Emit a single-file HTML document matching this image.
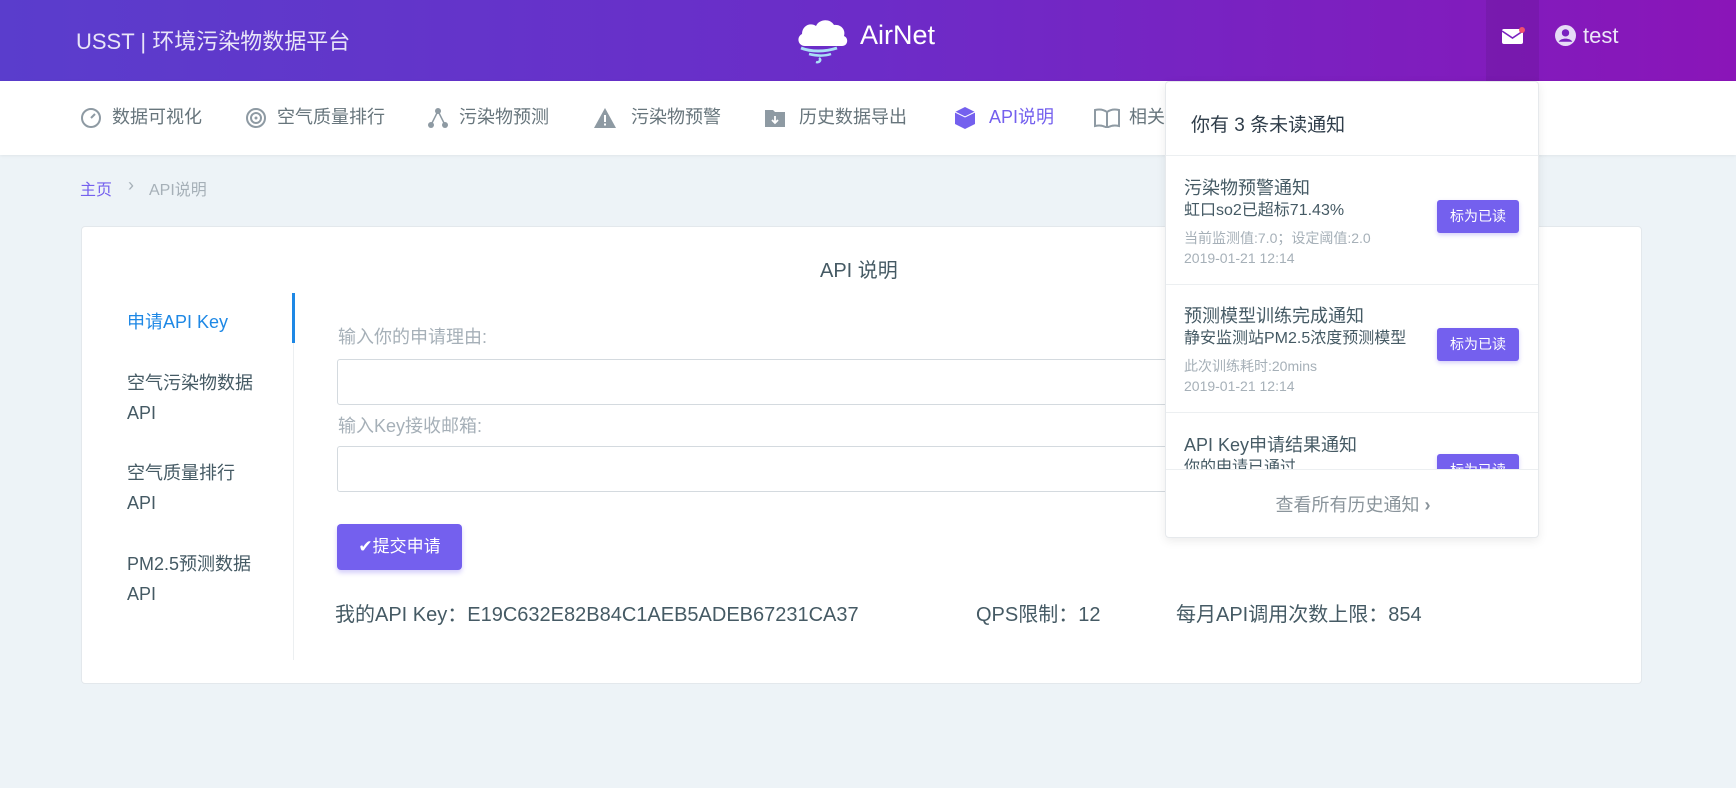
<!DOCTYPE html>
<html><head><meta charset="utf-8"><style>
*{box-sizing:border-box;margin:0;padding:0}
body{width:1736px;height:788px;overflow:hidden;background:#edf3f7;font-family:"Liberation Sans","Noto Sans CJK SC",sans-serif;color:#455a64;position:relative}
.a{position:absolute;white-space:nowrap}
.hdr{position:absolute;left:0;top:0;width:1736px;height:81px;background:linear-gradient(90deg,#5a3dcc,#6c2cc8 50%,#8a15b8);}
.nav{position:absolute;left:0;top:81px;width:1736px;height:74px;background:#fff;box-shadow:0 1px 3px rgba(0,0,0,.06)}
.ni{position:absolute;top:105px;font-size:18px;color:#67757c;line-height:24px}
.card{position:absolute;left:81px;top:226px;width:1561px;height:458px;background:#fff;border:1px solid #e3e8ec;border-radius:4px}
.inp{position:absolute;left:337px;width:900px;height:46px;border:1px solid #d4dadf;border-radius:3px;background:#fff}
.dd{position:absolute;left:1165px;top:81px;width:374px;height:457px;background:#fff;border:1px solid #e6e9ec;border-radius:4px;box-shadow:0 3px 10px rgba(0,0,0,.08);overflow:hidden}
.btn{position:absolute;left:271px;width:82px;height:33px;background:#7460ee;border-radius:3px;color:#fff;font-size:14px;text-align:center;line-height:33px;box-shadow:0 2px 4px rgba(116,96,238,.3)}
.t{position:absolute;left:18px;font-size:18px;color:#455a64}
.s{position:absolute;left:18px;font-size:16px;color:#455a64}
.m{position:absolute;left:18px;font-size:14px;color:#a6b0b8}
.ln{position:absolute;left:0;width:374px;height:1px;background:#eceff1}
</style></head><body>
<div class="hdr"></div>
<div class="a" style="left:76px;top:24px;font-size:22px;color:#e8e4f8">USST | 环境污染物数据平台</div>
<svg class="a" style="left:795px;top:12px" width="56" height="52" viewBox="0 0 56 52"><path d="M10 34c-7 0-9-9-3-12 0-8 8-12 14-8 3-7 14-8 18-1 7-1 12 5 10 11 5 2 4 10-2 10z" fill="#fff"/><path d="M6 36c10 4 24 4 36 0" stroke="#a9dff6" stroke-width="3" fill="none"/><path d="M14 42c8 2 16 2 22 0M24 46c3 2 0 5-3 4" stroke="#a9dff6" stroke-width="2.5" fill="none"/></svg>
<div class="a" style="left:860px;top:20px;font-size:27px;color:#fff">AirNet</div>
<div class="a" style="left:1486px;top:0;width:53px;height:81px;background:rgba(0,0,0,.07)"></div>
<svg class="a" style="left:1501px;top:27px" width="24" height="18" viewBox="0 0 24 18"><rect x="1" y="2" width="21" height="15" rx="2" fill="#fff"/><path d="M1 4l10.5 7L22 4" stroke="#7a22c0" stroke-width="1.6" fill="none"/><circle cx="21" cy="3" r="3" fill="#f0506e"/></svg>
<svg class="a" style="left:1555px;top:25px" width="21" height="21" viewBox="0 0 20 20"><circle cx="10" cy="10" r="10" fill="#e6dcf6"/><circle cx="10" cy="7.5" r="3.5" fill="#7a22c0"/><path d="M3.5 16c2-4 11-4 13 0" fill="#7a22c0"/></svg>
<div class="a" style="left:1583px;top:23px;font-size:22px;color:#ece6f8">test</div>

<div class="nav"></div>
<svg class="a" style="left:80px;top:107px" width="22" height="22"><circle cx="11" cy="11" r="9" fill="none" stroke="#8e9aa3" stroke-width="2"/><path d="M11 11l4-4" stroke="#8e9aa3" stroke-width="2"/></svg>
<div class="ni" style="left:112px">数据可视化</div>
<svg class="a" style="left:245px;top:107px" width="22" height="22"><circle cx="11" cy="11" r="9" fill="none" stroke="#8e9aa3" stroke-width="2"/><circle cx="11" cy="11" r="5" fill="none" stroke="#8e9aa3" stroke-width="2"/><circle cx="11" cy="11" r="1.5" fill="#8e9aa3"/></svg>
<div class="ni" style="left:277px">空气质量排行</div>
<svg class="a" style="left:427px;top:107px" width="22" height="22"><circle cx="11" cy="4" r="3" fill="#8e9aa3"/><circle cx="4" cy="18" r="3" fill="#8e9aa3"/><circle cx="18" cy="18" r="3" fill="#8e9aa3"/><path d="M11 4L4 18M11 4l7 14" stroke="#8e9aa3" stroke-width="1.5"/></svg>
<div class="ni" style="left:459px">污染物预测</div>
<svg class="a" style="left:593px;top:107px" width="24" height="22"><path d="M12 1L23 21H1z" fill="#8e9aa3"/><rect x="11" y="8" width="2" height="7" fill="#fff"/><rect x="11" y="16.5" width="2" height="2" fill="#fff"/></svg>
<div class="ni" style="left:631px">污染物预警</div>
<svg class="a" style="left:764px;top:107px" width="22" height="22"><path d="M1 3h8l2 2h10v15H1z" fill="#8e9aa3"/><path d="M11 9v7M8 13l3 3 3-3" stroke="#fff" stroke-width="1.8" fill="none"/></svg>
<div class="ni" style="left:799px">历史数据导出</div>
<svg class="a" style="left:954px;top:106px" width="22" height="24"><path d="M11 1l10 5v12l-10 5-10-5V6z" fill="#7460ee"/><path d="M1 6l10 5 10-5" stroke="#fff" stroke-width="1" fill="none"/></svg>
<div class="ni" style="left:989px;color:#7460ee">API说明</div>
<svg class="a" style="left:1094px;top:108px" width="26" height="20"><path d="M1 2c4-1 8-1 12 2 4-3 8-3 12-2v16c-4-1-8-1-12 2-4-3-8-3-12-2z" fill="none" stroke="#8e9aa3" stroke-width="2"/><path d="M13 4v16" stroke="#8e9aa3" stroke-width="2"/></svg>
<div class="ni" style="left:1129px">相关</div>

<div class="a" style="left:80px;top:176px;font-size:16px;color:#7460ee">主页</div>
<div class="a" style="left:128px;top:175px;font-size:18px;color:#a6b0b8">›</div>
<div class="a" style="left:149px;top:176px;font-size:16px;color:#a6b0b8">API说明</div>

<div class="card"></div>
<div class="a" style="left:820px;top:254px;font-size:20px;color:#455a64">API 说明</div>
<div class="a" style="left:292px;top:293px;width:3px;height:50px;background:#1e88e5"></div>
<div class="a" style="left:293px;top:343px;width:1px;height:317px;background:#eceff1"></div>
<div class="a" style="left:127px;top:308px;font-size:18px;color:#1e88e5">申请API Key</div>
<div class="a" style="left:127px;top:368px;font-size:18px;line-height:30px">空气污染物数据<br>API</div>
<div class="a" style="left:127px;top:458px;font-size:18px;line-height:30px">空气质量排行<br>API</div>
<div class="a" style="left:127px;top:549px;font-size:18px;line-height:30px">PM2.5预测数据<br>API</div>
<div class="a" style="left:338px;top:323px;font-size:18px;color:#a6b0b8">输入你的申请理由:</div>
<div class="inp" style="top:359px"></div>
<div class="a" style="left:338px;top:412px;font-size:18px;color:#a6b0b8">输入Key接收邮箱:</div>
<div class="inp" style="top:446px"></div>
<div class="a" style="left:337px;top:524px;width:125px;height:46px;background:#7460ee;border-radius:4px;color:#fff;font-size:17px;line-height:46px;text-align:center;box-shadow:0 3px 5px rgba(116,96,238,.3)">✔提交申请</div>
<div class="a" style="left:335px;top:598px;font-size:20px">我的API Key：E19C632E82B84C1AEB5ADEB67231CA37</div>
<div class="a" style="left:976px;top:598px;font-size:20px">QPS限制：12</div>
<div class="a" style="left:1176px;top:598px;font-size:20px">每月API调用次数上限：854</div>

<div class="dd">
<div class="a" style="left:25px;top:28px;font-size:19px;color:#2f3d4a">你有 3 条未读通知</div>
<div class="ln" style="top:73px"></div>
<div class="t" style="top:92px">污染物预警通知</div>
<div class="s" style="top:114px">虹口so2已超标71.43%</div>
<div class="m" style="top:146px">当前监测值:7.0；设定阈值:2.0</div>
<div class="m" style="top:168px">2019-01-21 12:14</div>
<div class="btn" style="top:118px">标为已读</div>
<div class="ln" style="top:202px"></div>
<div class="t" style="top:220px">预测模型训练完成通知</div>
<div class="s" style="top:242px">静安监测站PM2.5浓度预测模型</div>
<div class="m" style="top:274px">此次训练耗时:20mins</div>
<div class="m" style="top:296px">2019-01-21 12:14</div>
<div class="btn" style="top:246px">标为已读</div>
<div class="ln" style="top:330px"></div>
<div style="position:absolute;left:0;top:331px;width:374px;height:56px;overflow:hidden">
<div class="t" style="top:18px">API Key申请结果通知</div>
<div class="s" style="top:40px">你的申请已通过</div>
<div class="btn" style="top:41px">标为已读</div>
</div>
<div class="ln" style="top:387px"></div>
<div class="a" style="left:0;width:374px;text-align:center;top:409px;font-size:18px;color:#8a949b">查看所有历史通知 <b>›</b></div>
</div>
</body></html>
